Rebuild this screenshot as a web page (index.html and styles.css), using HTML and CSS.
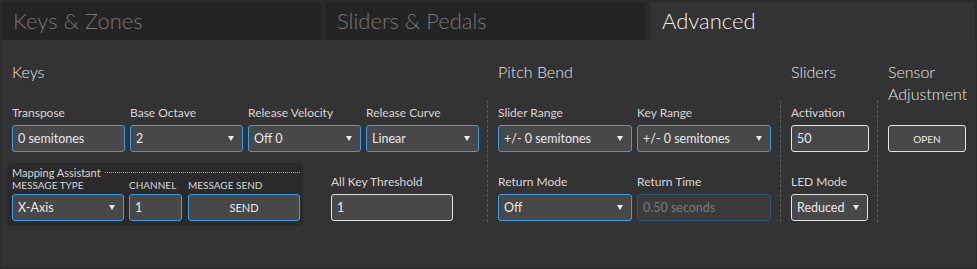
FILE: index.html
```html
<html>
	<head>
		<title>Advanced</title>
		<link rel="stylesheet" href="styles.css">
	</head>
	<body>
		<div class="tabs">
			<div class="tab t1">Keys &amp; Zones</div>
			<div class="tab t2">Sliders &amp; Pedals</div>
			<div class="tab t3 active">Advanced</div>
		</div>

		<div class="panel">

			<div class="section keys">
				<h2>Keys</h2>
				<div class="body">
					<div class="row">
						<div class="field w113">
							<label>Transpose</label>
							<input class="ctl" value="0 semitones">
						</div>
						<div class="field w113">
							<label>Base Octave</label>
							<div class="select"><select class="ctl"><option>2</option></select></div>
						</div>
						<div class="field w113">
							<label>Release Velocity</label>
							<div class="select"><select class="ctl"><option>Off 0</option></select></div>
						</div>
						<div class="field w113">
							<label>Release Curve</label>
							<div class="select"><select class="ctl"><option>Linear</option></select></div>
						</div>
					</div>
					<div class="row row2">
						<div class="mapping">
							<div class="map-title"><span>Mapping Assistant</span><i></i></div>
							<div class="map-fields">
								<div class="field w112">
									<label class="small">Message Type</label>
									<div class="select"><select class="ctl"><option>X-Axis</option></select></div>
								</div>
								<div class="field w53">
									<label class="small">Channel</label>
									<input class="ctl" value="1">
								</div>
								<div class="field w112 send">
									<label class="small">Message Send</label>
									<button class="ctl btn">SEND</button>
								</div>
							</div>
						</div>
						<div class="field w122 threshold">
							<label>All Key Threshold</label>
							<input class="ctl white" value="1">
						</div>
					</div>
				</div>
			</div> <!-- end .keys -->

			<div class="section pitch">
				<h2>Pitch Bend</h2>
				<div class="body">
					<div class="row">
						<div class="field w134">
							<label>Slider Range</label>
							<div class="select"><select class="ctl"><option>+/- 0 semitones</option></select></div>
						</div>
						<div class="field w134">
							<label>Key Range</label>
							<div class="select"><select class="ctl"><option>+/- 0 semitones</option></select></div>
						</div>
					</div>
					<div class="row row2">
						<div class="field w134 pad2">
							<label>Return Mode</label>
							<div class="select"><select class="ctl"><option>Off</option></select></div>
						</div>
						<div class="field w134 pad2">
							<label>Return Time</label>
							<input class="ctl" value="0.50 seconds" disabled>
						</div>
					</div>
				</div>
			</div> <!-- end .pitch -->

			<div class="section sliders">
				<h2>Sliders</h2>
				<div class="body">
					<div class="row">
						<div class="field w78">
							<label>Activation</label>
							<input class="ctl white" value="50">
						</div>
					</div>
					<div class="row row2">
						<div class="field w77 pad2">
							<label>LED Mode</label>
							<div class="select"><select class="ctl white"><option>Reduced</option></select></div>
						</div>
					</div>
				</div>
			</div> <!-- end .sliders -->

			<div class="section sensor">
				<h2>Sensor Adjustment</h2>
				<div class="body">
					<div class="row">
						<div class="field w78">
							<label>&nbsp;</label>
							<button class="ctl white btn open">OPEN</button>
						</div>
					</div>
				</div>
			</div> <!-- end .sensor -->

		</div> <!-- end .panel -->
	</body>
</html>
```

FILE: styles.css
```css
html, body {
	margin: 0;
	height: 100%;
}

body {
	background: #2b2b2b;
	font-family: Lato, "Noto Sans", sans-serif;
	color: #e6e6e6;
	overflow: hidden;
}

/* tabs */

.tabs {
	display: flex;
	padding: 2px 0 0 2px;
	height: 38px;
}

.tab {
	box-sizing: border-box;
	height: 38px;
	padding: 5px 0 0 11px;
	font-size: 22px;
	line-height: 28px;
	font-weight: 300;
	color: #777;
	background: #242424;
	border-radius: 2px 2px 0 0;
}

.t1 { width: 319px; }
.t2 { width: 319px; margin-left: 5px; }
.t3 { width: 323px; margin-left: 6px; }

.tab.active {
	background: #333;
	color: #eee;
}

/* panel */

.panel {
	display: flex;
	margin: 0 1px;
	height: 227px;
	padding-top: 21px;
	box-sizing: border-box;
	background: #333;
}

.section h2 {
	margin: 0;
	height: 39px;
	font-size: 16px;
	line-height: 22px;
	font-weight: 300;
	color: #e4e4e4;
	padding-left: 11px;
}

.section .body {
	height: 122px;
	box-sizing: border-box;
	padding: 5px 0 0 10px;
	border-left: 1px dashed #5c5c5c;
}

.keys { width: 486px; }
.keys .body { border-left: 0; padding-left: 11px; }
.pitch { width: 293px; }
.sliders { width: 97px; }
.sensor { width: 99px; }
.sensor h2 { padding-right: 8px; }

.row {
	display: flex;
	gap: 5px;
}

.row2 {
	margin-top: 11px;
}

.field {
	display: flex;
	flex-direction: column;
}

.field label {
	font-size: 12px;
	line-height: 16px;
	margin-bottom: 4px;
	color: #d6d6d6;
	white-space: nowrap;
}

.pad2 { padding-top: 11px; }
.threshold { padding-top: 11px; margin-left: 23px; }

.w53 { width: 53px; }
.w77 { width: 77px; }
.w78 { width: 78px; }
.w112 { width: 112px; }
.w113 { width: 113px; }
.w122 { width: 122px; }
.w134 { width: 134px; }

/* controls */

.ctl {
	-webkit-appearance: none;
	appearance: none;
	box-sizing: border-box;
	width: 100%;
	height: 27px;
	margin: 0;
	padding: 0 5px;
	border: 1px solid #3a9fe6;
	border-radius: 3px;
	background: #484848;
	color: #e8e8e8;
	font-family: Lato, "Noto Sans", sans-serif;
	font-size: 12.5px;
	outline: none;
}

.ctl.white {
	border-color: #e2e2e2;
}

.ctl:disabled {
	border-color: #2c5878;
	background: #3b3b3b;
	color: #7a7a7a;
}

.select {
	position: relative;
}

.select::after {
	content: "";
	position: absolute;
	right: 9px;
	top: 11px;
	border-left: 3.5px solid transparent;
	border-right: 3.5px solid transparent;
	border-top: 5px solid #eee;
}

.btn {
	text-align: center;
	font-size: 11px;
	cursor: pointer;
}

.btn.open {
	font-size: 10px;
}

/* mapping assistant */

.mapping {
	width: 296px;
	box-sizing: border-box;
	margin-left: -5px;
	padding: 3px 3px 5px 5px;
	background: #2a2a2a;
	border-radius: 4px;
}

.map-title {
	display: flex;
	align-items: center;
	font-size: 11px;
	line-height: 13px;
	color: #d6d6d6;
}

.map-title i {
	flex: 1;
	margin-left: 4px;
	border-bottom: 1px dotted #aaa;
}

.map-fields {
	display: flex;
	gap: 5px;
}

.map-fields .send {
	margin-left: 1px;
}

.field .small {
	font-size: 10px;
	line-height: 12px;
	margin-bottom: 3px;
	text-transform: uppercase;
	color: #d6d6d6;
}
```
